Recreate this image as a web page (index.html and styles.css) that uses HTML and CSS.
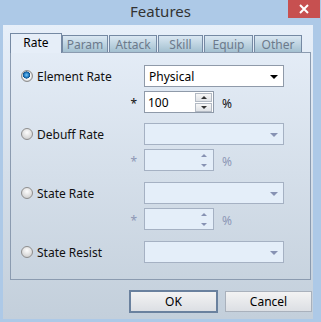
FILE: index.html
```html
<!DOCTYPE html>
<html lang="en">
<head>
    <meta charset="UTF-8">
    <title>Features</title>
    <link rel="stylesheet" href="styles.css">
</head>
<body>
    <div class="window">
        <div class="titlebar">
            <span class="title">Features</span>
            <span class="close">
                <svg width="10" height="10" viewBox="0 0 10 10"><path d="M1 1L9 9M9 1L1 9" stroke="#fff" stroke-width="2"/></svg>
            </span>
        </div>
        <div class="frame">
            <div class="client">
                <div class="tabs">
                    <div class="tab active t-rate">Rate</div>
                    <div class="tab t-param">Param</div>
                    <div class="tab t-attack">Attack</div>
                    <div class="tab t-skill">Skill</div>
                    <div class="tab t-equip">Equip</div>
                    <div class="tab t-other">Other</div>
                </div>

                <div class="panel">
                    <div class="group">
                        <div class="line">
                            <div class="label-cell"><span class="radio checked"></span>Element Rate</div>
                            <div class="combo"><span>Physical</span><span class="arrow"></span></div>
                        </div>
                        <div class="line sub">
                            <div class="label-cell mult">*</div>
                            <div class="spin">
                                <span class="value">100</span>
                                <span class="spin-btns"><span class="up"></span><span class="down"></span></span>
                            </div>
                            <span class="pct">%</span>
                        </div>
                    </div>

                    <div class="group disabled">
                        <div class="line">
                            <div class="label-cell"><span class="radio"></span>Debuff Rate</div>
                            <div class="combo"><span></span><span class="arrow"></span></div>
                        </div>
                        <div class="line sub">
                            <div class="label-cell mult">*</div>
                            <div class="spin">
                                <span class="value"></span>
                                <span class="spin-btns"><span class="up"></span><span class="down"></span></span>
                            </div>
                            <span class="pct">%</span>
                        </div>
                    </div>

                    <div class="group disabled">
                        <div class="line">
                            <div class="label-cell"><span class="radio"></span>State Rate</div>
                            <div class="combo"><span></span><span class="arrow"></span></div>
                        </div>
                        <div class="line sub">
                            <div class="label-cell mult">*</div>
                            <div class="spin">
                                <span class="value"></span>
                                <span class="spin-btns"><span class="up"></span><span class="down"></span></span>
                            </div>
                            <span class="pct">%</span>
                        </div>
                    </div>

                    <div class="group disabled">
                        <div class="line">
                            <div class="label-cell"><span class="radio"></span>State Resist</div>
                            <div class="combo"><span></span><span class="arrow"></span></div>
                        </div>
                    </div>
                </div>

                <div class="buttons">
                    <button class="btn default">OK</button>
                    <button class="btn">Cancel</button>
                </div>
            </div>
        </div>
    </div>
</body>
</html>
```

FILE: styles.css
```css
body {
    margin: 0;
    font-family: 'Noto Sans', 'Open Sans', sans-serif;
    font-size: 12px;
    color: #111;
}

.window {
    width: 321px;
    height: 322px;
    background-color: #adc9e7;
    display: flex;
    flex-direction: column;
    position: relative;
}

.titlebar {
    height: 25px;
    display: flex;
    justify-content: center;
    align-items: center;
}

.title {
    font-size: 15px;
    color: #333;
    padding-bottom: 3px;
}

.close {
    position: absolute;
    top: 0;
    right: 1px;
    width: 32px;
    height: 18px;
    background-color: #c75050;
    display: flex;
    justify-content: center;
    align-items: center;
}

.frame {
    flex: 1;
    display: flex;
    padding: 0 8px 3px 3px;
}

.client {
    flex: 1;
    background: linear-gradient(#e7eff9, #c3cfdb);
    padding: 8px 2px 0 7px;
    display: flex;
    flex-direction: column;
}

/* tab strip */
.tabs {
    display: flex;
    align-items: flex-end;
    height: 19px;
}

.tab {
    box-sizing: border-box;
    height: 17px;
    margin-left: 1px;
    border: 1px solid #7589a3;
    border-bottom: none;
    background: linear-gradient(#dae7f2, #a3c0d0);
    color: #6c7a8c;
    display: flex;
    justify-content: center;
    align-items: center;
    line-height: 1;
    padding-top: 1px;
}

.tab.active {
    height: 20px;
    margin-left: 0;
    margin-bottom: -1px;
    background: #e6eef8;
    color: #000;
    position: relative;
    z-index: 1;
    padding-top: 0;
    padding-bottom: 2px;
}

.t-rate { width: 52px; }
.t-param { width: 46px; margin-left: 0; }
.t-attack { width: 48px; }
.t-skill { width: 45px; }
.t-equip { width: 49px; }
.t-other { width: 48px; }

.panel {
    box-sizing: border-box;
    height: 228px;
    border: 1px solid #8b9bb0;
    padding: 11px 0 0 10px;
}

.group {
    height: 59px;
}

.group:first-child {
    height: 58px;
    margin-top: 1px;
}

.line {
    display: flex;
    align-items: center;
    height: 22px;
}

.line.sub {
    margin-top: 4px;
}

.label-cell {
    width: 123px;
    display: flex;
    align-items: center;
    color: #111;
}

.mult {
    justify-content: flex-end;
    box-sizing: border-box;
    padding-right: 7px;
    padding-top: 2px;
}

/* radio buttons */
.radio {
    box-sizing: border-box;
    width: 12px;
    height: 12px;
    margin-right: 4px;
    border-radius: 50%;
    border: 1px solid #8e8e8e;
    background: radial-gradient(circle at 50% 35%, #fdfdfd, #d6d6d6 70%, #c2c2c2);
}

.radio.checked {
    background:
        radial-gradient(circle at 45% 40%, #7cc4f2 0, #2a86cc 25%, #0c4f8c 42%, transparent 46%),
        radial-gradient(circle, #f4f4f4 55%, #c9c9c9 70%);
}

/* combo boxes */
.combo {
    box-sizing: border-box;
    width: 140px;
    height: 22px;
    border: 1px solid #8f9aa9;
    background-color: #fff;
    display: flex;
    align-items: center;
    justify-content: space-between;
    padding: 0 5px 0 4px;
    color: #000;
}

.arrow {
    width: 0;
    height: 0;
    border-left: 4px solid transparent;
    border-right: 4px solid transparent;
    border-top: 4px solid #000;
    margin-top: 1px;
}

/* spin boxes */
.spin {
    box-sizing: border-box;
    width: 70px;
    height: 22px;
    border: 1px solid #8f9aa9;
    background-color: #fff;
    display: flex;
    align-items: center;
    justify-content: space-between;
    padding: 0 1px 0 3px;
    color: #000;
}

.spin-btns {
    display: flex;
    flex-direction: column;
    gap: 1px;
}

.spin-btns span {
    box-sizing: border-box;
    width: 17px;
    height: 9px;
    border: 1px solid #b3bac4;
    background: linear-gradient(#f7f7f7, #dfe2e6);
    position: relative;
}

.spin-btns span::after {
    content: '';
    position: absolute;
    left: 5px;
    top: 2px;
    border-left: 3px solid transparent;
    border-right: 3px solid transparent;
}

.spin-btns .up::after {
    border-bottom: 3px solid #333;
}

.spin-btns .down::after {
    border-top: 3px solid #333;
}

.pct {
    margin-left: 8px;
    padding-top: 3px;
    color: #111;
}

/* disabled rows */
.disabled .combo,
.disabled .spin {
    background-color: #e4eef9;
    border-color: #a5b1c3;
}

.disabled .arrow {
    border-top-color: #8792b3;
}

.disabled .spin-btns span {
    border-color: transparent;
    background: none;
}

.disabled .spin-btns .up::after {
    border-bottom-color: #8792b3;
}

.disabled .spin-btns .down::after {
    border-top-color: #8792b3;
}

.disabled .mult,
.disabled .pct {
    color: #8d97b5;
}

/* dialog buttons */
.buttons {
    display: flex;
    justify-content: flex-end;
    gap: 8px;
    margin-top: 11px;
    margin-right: -1px;
}

.btn {
    box-sizing: border-box;
    width: 87px;
    height: 21px;
    border: 1px solid #a9b1bc;
    background: linear-gradient(#f3f3f3, #dcdfe4);
    font-family: 'Noto Sans', 'Open Sans', sans-serif;
    font-size: 12px;
    color: #000;
    padding: 0;
}

.btn.default {
    border-color: #6a819e;
    box-shadow: 0 0 0 1px #6a819e;
    margin-top: 0;
}
```
